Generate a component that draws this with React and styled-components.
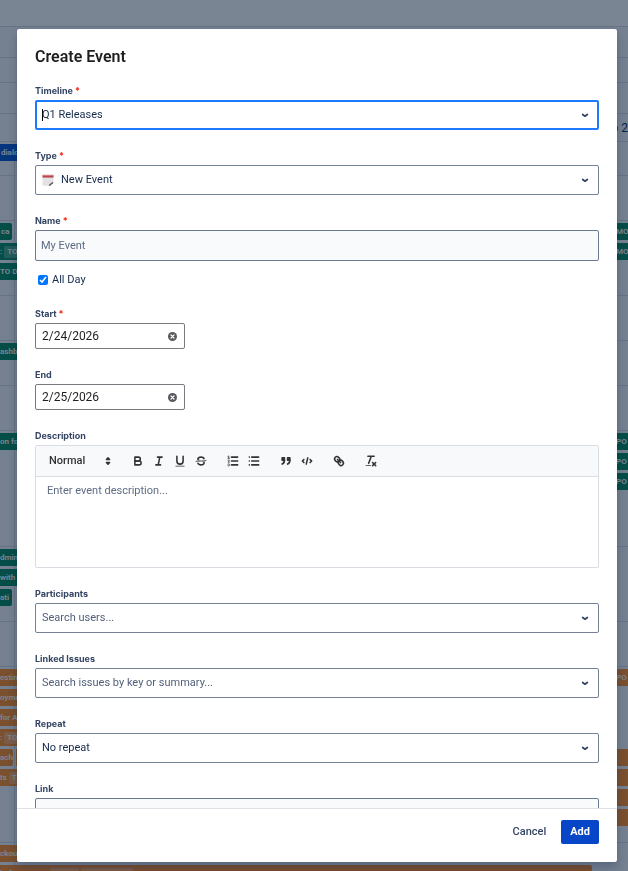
import React from 'react';
import styled, { createGlobalStyle } from 'styled-components';

const GlobalStyle = createGlobalStyle`
  * {
    box-sizing: border-box;
  }

  body {
    margin: 0;
    overflow: hidden;
    font-family: Roboto, "Liberation Sans", sans-serif;
    font-size: 11px;
    line-height: 16px;
    color: #172b4d;
  }

  button,
  input,
  select,
  textarea {
    font: inherit;
    color: inherit;
  }
`;

/* board behind the dialog */

const Board = styled.div`
  height: 100vh;
  overflow: hidden;
  background: #f4f5f7;
`;

const Band = styled.div`
  height: ${({ $height }) => $height}px;
  padding-top: ${({ $top }) => $top || 0}px;
  border-bottom: 1px solid #d5d8df;
  background: ${({ $light }) => ($light ? '#ffffff' : 'transparent')};
`;

const Days = styled(Band)`
  display: flex;
  align-items: center;
  justify-content: flex-end;
  font-size: 12px;
`;

const Columns = styled.div`
  background: linear-gradient(#d0d4dc, #d0d4dc) 14px 0 / 1px 100% no-repeat;
`;

const Lane = styled.div`
  display: flex;
  gap: 3px;
  height: 20px;
`;

const colors = {
  green: '#00875a',
  orange: '#ff8b24',
  blue: '#0052cc',
};

const Bar = styled.div`
  display: flex;
  align-items: center;
  gap: 2px;
  width: ${({ $width }) => $width || '60px'};
  height: 17px;
  padding-left: ${({ $pad }) => $pad || 0}px;
  margin-left: ${({ $right }) => ($right ? 'auto' : '0')};
  overflow: hidden;
  border-radius: ${({ $round }) => ($round ? '0 2px 2px 0' : '0')};
  background: ${({ $color }) => colors[$color]};
  color: #ffffff;
  font-size: 8px;
  font-weight: 600;
  line-height: 12px;
  white-space: nowrap;
`;

const Tag = styled.span`
  flex: none;
  height: 12px;
  padding: 0 3px;
  border-radius: 2px;
  background: rgba(255, 255, 255, 0.25);
`;

/* dialog */

const Blanket = styled.div`
  position: fixed;
  inset: 0;
  display: flex;
  padding: 29px 11px 9px 17px;
  background: rgba(9, 30, 58, 0.54);
`;

const Dialog = styled.form`
  display: flex;
  flex: 1;
  flex-direction: column;
  max-width: 800px;
  margin: 0 auto;
  border-radius: 2px;
  background: #ffffff;
  box-shadow: 0 0 1px rgba(9, 30, 66, 0.31), 0 6px 10px rgba(9, 30, 66, 0.25);
`;

const Title = styled.h1`
  margin: 0;
  padding: 18px;
  color: #1e1f21;
  font-size: 16px;
  font-weight: 600;
  line-height: 20px;
`;

const Body = styled.div`
  display: flex;
  flex: 1;
  flex-direction: column;
  gap: 20px;
  min-height: 0;
  padding: 0 18px 18px;
  overflow-y: auto;
  scrollbar-width: none;
`;

const Footer = styled.div`
  display: flex;
  align-items: center;
  justify-content: flex-end;
  gap: 6px;
  padding: 11px 18px 18px;
  border-top: 1px solid #dfe1e6;
`;

const Button = styled.button`
  height: 24px;
  padding: 0 9px;
  border: 0;
  border-radius: 2px;
  background: ${({ $primary }) => ($primary ? '#0747c7' : 'transparent')};
  color: ${({ $primary }) => ($primary ? '#ffffff' : '#344563')};
  font-weight: ${({ $primary }) => ($primary ? 700 : 500)};
`;

const Field = styled.div`
  flex: none;
`;

const Label = styled.label`
  display: block;
  height: 15px;
  color: #344563;
  font-family: Inter, "Liberation Sans", sans-serif;
  font-size: 9px;
  font-weight: 700;
  line-height: 12px;
`;

const Required = styled.span`
  margin-left: 2px;
  color: #ff1f0f;
`;

const SelectBox = styled.div`
  display: flex;
  align-items: center;
  height: 30px;
  padding: 0 ${({ $focused }) => ($focused ? 8 : 9)}px 0 ${({ $focused }) => ($focused ? 5 : 6)}px;
  border: ${({ $focused }) => ($focused ? '2px solid #1d7afc' : '1px solid #758195')};
  border-radius: 2px;
`;

const Select = styled.select`
  flex: 1;
  min-width: 0;
  padding: 0;
  border: 0;
  outline: 0;
  appearance: none;
  background: transparent;
  color: ${({ $empty }) => ($empty ? '#505f79' : '#172b4d')};
`;

const Caret = styled.span`
  width: 1px;
  height: 12px;
  margin-right: -1px;
  background: #000000;
`;

const TextInput = styled.input`
  display: block;
  width: 100%;
  height: 31px;
  padding: 0 5px;
  border: 1px solid #6b7a90;
  border-radius: 2px;
  background: #f8fafc;

  &::placeholder {
    color: #5e6c84;
    opacity: 1;
  }
`;

const CheckRow = styled.label`
  display: flex;
  align-items: center;
  gap: 4px;
  padding: 11px 0 0 3px;
`;

const Checkbox = styled.input`
  width: 10px;
  height: 10px;
  margin: 0;
  accent-color: #0075ff;
`;

const DateBox = styled.div`
  display: flex;
  align-items: center;
  width: 150px;
  height: 26px;
  padding: 0 6px;
  border: 1px solid #7a7a80;
  border-radius: 2px;
`;

const DateInput = styled.input`
  flex: 1;
  min-width: 0;
  padding: 0;
  border: 0;
  outline: 0;
  background: transparent;
  color: #1e1f21;
  font-size: 12px;
`;

const IconButton = styled.button`
  display: flex;
  align-items: center;
  justify-content: center;
  width: ${({ $width }) => $width}px;
  height: 18px;
  padding: 0;
  border: 0;
  background: transparent;
`;

const Editor = styled.div`
  border: 1px solid #d9dce3;
  border-radius: 2px;
`;

const Toolbar = styled.div`
  display: flex;
  align-items: center;
  gap: 11px;
  height: 31px;
  padding: 0 6px;
  border-bottom: 1px solid #d9dce3;
  background: #f8f9fb;
`;

const ToolGroup = styled.div`
  display: flex;
`;

const Picker = styled.div`
  display: flex;
  align-items: center;
  width: 74px;
  padding: 0 1px 0 7px;
`;

const PickerSelect = styled(Select)`
  color: #333333;
  font-weight: 500;
`;

const Description = styled.textarea`
  display: block;
  width: 100%;
  height: 90px;
  padding: 6px 11px;
  border: 0;
  outline: 0;
  resize: none;
  background: transparent;

  &::placeholder {
    color: #5e6c84;
    opacity: 1;
  }
`;

const ToolSvg = styled.svg`
  width: 14px;
  height: 14px;
  fill: none;
  stroke: #333333;
  stroke-width: 2;
  stroke-linecap: round;
  stroke-linejoin: round;

  .fill {
    fill: #333333;
  }

  .solid {
    fill: #333333;
    stroke: none;
  }

  .thin {
    stroke-width: 1;
  }
`;

const icons = {
  Bold: (
    <>
      <path d="M5,4H9.5A2.5,2.5,0,0,1,9.5,9H5Z" />
      <path d="M5,9h5.5A2.5,2.5,0,0,1,10.5,14H5Z" />
    </>
  ),
  Italic: <path d="M7,4H13M5,14H11M8,14L10,4" />,
  Underline: (
    <>
      <path d="M5,3V9a4,4,0,0,0,8,0V3" />
      <rect className="solid" x="3" y="15" width="12" height="1" rx="0.5" />
    </>
  ),
  Strike: (
    <>
      <path className="thin" d="M15.5,8.5L2.5,9.5" />
      <path
        className="solid"
        d="M9.007,8C6.542,7.791,6,7.519,6,6.5,6,5.792,7.283,5,9,5c1.571,0,2.765.679,2.969,1.309a1,1,0,0,0,1.9-.617C13.356,4.106,11.354,3,9,3,6.2,3,4,4.538,4,6.5a3.2,3.2,0,0,0,.5,1.843Z"
      />
      <path
        className="solid"
        d="M8.984,10C11.457,10.208,12,10.479,12,11.5c0,.708-1.283,1.5-3,1.5-1.571,0-2.765-.679-2.969-1.309a1,1,0,1,0-1.9.617C4.644,13.894,6.646,15,9,15c2.8,0,5-1.538,5-3.5a3.2,3.2,0,0,0-.5-1.843Z"
      />
    </>
  ),
  'Ordered list': (
    <>
      <path d="M7,4H15M7,9H15M7,14H15" />
      <path className="thin" d="M2.5,5.5H4.5M2.5,3L3.5,2.5V5.5" />
      <path className="thin" d="M4.5,10.5h-2c0-.234,1.85-1.076,1.85-2.234A.959,.959,0,0,0,2.5,8.156" />
      <path
        className="thin"
        d="M2.5,14.846a.959,.959,0,0,0,1.85-.109A.7,.7,0,0,0,3.75,14a.688,.688,0,0,0,.6-.736,.959,.959,0,0,0-1.85-.109"
      />
    </>
  ),
  'Bullet list': <path d="M6,4H15M6,9H15M6,14H15M3,4H3.01M3,9H3.01M3,14H3.01" />,
  Quote: (
    <>
      <path className="fill" d="M4,5H7V8H4ZM11,5H14V8H11Z" />
      <path className="fill" d="M7,8c0,4.031-3,5-3,5M14,8c0,4.031-3,5-3,5" />
    </>
  ),
  Code: <path d="M5,7L3,9L5,11M13,7L15,9L13,11M10,5L8,13" />,
  Link: (
    <>
      <path d="M7,7L11,11" />
      <path d="M8.9,4.577a3.476,3.476,0,0,1,.36,4.679A3.476,3.476,0,0,1,4.577,8.9C3.185,7.5,2.035,6.4,4.217,4.217S7.5,3.185,8.9,4.577Z" />
      <path d="M13.423,9.1a3.476,3.476,0,0,0-4.679-.36,3.476,3.476,0,0,0,.36,4.679c1.392,1.392,2.5,2.542,4.679.36S14.815,10.5,13.423,9.1Z" />
    </>
  ),
  'Clear formatting': (
    <>
      <path d="M5,3H13M6,12L9.35,3M11,11L15,15M15,11L11,15" />
      <rect className="solid" x="2" y="14" width="7" height="1" rx="0.5" />
    </>
  ),
};

const toolGroups = [
  ['Bold', 'Italic', 'Underline', 'Strike'],
  ['Ordered list', 'Bullet list'],
  ['Quote', 'Code'],
  ['Link'],
  ['Clear formatting'],
];

function Chevron() {
  return (
    <svg width="10" height="10" viewBox="0 0 10 10" fill="none" stroke="#344563" strokeWidth="1.8">
      <path d="M3.7 4.5L6 6.2L8.3 4.5" strokeLinecap="round" strokeLinejoin="round" />
    </svg>
  );
}

function CalendarIcon() {
  return (
    <svg width="12" height="12" viewBox="0 0 12 12">
      <path d="M0.5 1H11.5V8.5L8.5 11.8H0.5Z" fill="#e4e2e2" />
      <path d="M0.5 1H11.5V3.6H0.5Z" fill="#b8484b" />
      <path d="M0.5 0.4H11.5V1.4H0.5Z" fill="#e8c9c9" />
      <path d="M11.5 8L8.2 8.8L6.6 11.8H8.4Z" fill="#c9c9c9" />
      <path d="M11 8.6L7.2 11.5" stroke="#55565a" strokeWidth="1.3" />
    </svg>
  );
}

function ClearIcon() {
  return (
    <svg width="9" height="9" viewBox="0 0 9 9">
      <circle cx="4.5" cy="4.5" r="4.5" fill="#58595c" />
      <path d="M3 3L6 6M6 3L3 6" stroke="#ffffff" strokeWidth="1.2" strokeLinecap="round" />
    </svg>
  );
}

function SelectField({ id, label, value, required, focused, empty, icon }) {
  return (
    <Field>
      <Label htmlFor={id}>
        {label}
        {required && <Required>*</Required>}
      </Label>
      <SelectBox $focused={focused}>
        {focused && <Caret />}
        {icon}
        <Select id={id} $empty={empty}>
          <option>{value}</option>
        </Select>
        <Chevron />
      </SelectBox>
    </Field>
  );
}

function DateField({ id, label, value, required }) {
  return (
    <Field>
      <Label htmlFor={id}>
        {label}
        {required && <Required>*</Required>}
      </Label>
      <DateBox>
        <DateInput id={id} type="text" defaultValue={value} />
        <IconButton type="button" $width={11} aria-label={`Clear ${label}`}>
          <ClearIcon />
        </IconButton>
      </DateBox>
    </Field>
  );
}

const TypeIcon = styled.span`
  display: flex;
  margin-right: 7px;
`;

function Timeline() {
  return (
    <Board>
      <Band $height={27} $light />
      <Band $height={31} />
      <Band $height={25} />
      <Band $height={31} />
      <Days $height={28}>b 2</Days>
      <Columns>
        <Band $height={34} $top={2}>
          <Lane>
            <Bar $color="blue" $pad={1}>dialo</Bar>
          </Lane>
        </Band>
        <Band $height={45} />
        <Band $height={75} $top={2}>
          <Lane>
            <Bar $color="green" $width="12px" $pad={1} $round>ca</Bar>
            <Bar $color="green" $width="12px" $right>MO</Bar>
          </Lane>
          <Lane>
            <Bar $color="green">: <Tag>TO</Tag></Bar>
            <Bar $color="green" $width="12px" $right>MO</Bar>
          </Lane>
          <Lane>
            <Bar $color="green">TO D</Bar>
          </Lane>
        </Band>
        <Band $height={45} />
        <Band $height={45} $top={2}>
          <Lane>
            <Bar $color="green">ashb</Bar>
          </Lane>
        </Band>
        <Band $height={45} />
        <Band $height={116} $top={2}>
          <Lane>
            <Bar $color="green">on fo</Bar>
            <Bar $color="green" $right $width="12px">PO</Bar>
          </Lane>
          <Lane>
            <Bar $color="green" $right $width="12px">PO</Bar>
          </Lane>
          <Lane>
            <Bar $color="green" $right $width="12px">PO</Bar>
          </Lane>
        </Band>
        <Band $height={75} $top={2}>
          <Lane>
            <Bar $color="green">dmin</Bar>
          </Lane>
          <Lane>
            <Bar $color="green">with</Bar>
          </Lane>
          <Lane>
            <Bar $color="green" $width="12px" $round>ati</Bar>
          </Lane>
        </Band>
        <Band $height={45} />
        <Band $height={176} $top={2}>
          <Lane>
            <Bar $color="orange">estin</Bar>
            <Bar $color="orange" $right $width="12px">PO</Bar>
          </Lane>
          <Lane>
            <Bar $color="orange">oyme</Bar>
          </Lane>
          <Lane>
            <Bar $color="orange">for A</Bar>
          </Lane>
          <Lane>
            <Bar $color="orange">: <Tag>TO</Tag></Bar>
          </Lane>
          <Lane>
            <Bar $color="orange" $width="13px" $round>ach</Bar>
            <Bar $color="orange" />
            <Bar $color="orange" $right />
          </Lane>
          <Lane>
            <Bar $color="orange">ts <Tag>T</Tag></Bar>
            <Bar $color="orange" $right />
          </Lane>
          <Lane>
            <Bar $color="orange" $right />
          </Lane>
          <Lane>
            <Bar $color="orange" $right />
          </Lane>
        </Band>
        <Band $height={45} $top={2}>
          <Lane>
            <Bar $color="orange">ckou</Bar>
          </Lane>
          <Lane>
            <Bar $color="orange" $width="calc(100% - 36px)" $round>
              l of user acco <Tag>TO DO</Tag>
              <Tag>IMPORTANT</Tag>
            </Bar>
          </Lane>
        </Band>
      </Columns>
    </Board>
  );
}

export default function App() {
  return (
    <>
      <GlobalStyle />
      <Timeline />
      <Blanket>
        <Dialog>
          <Title>Create Event</Title>
          <Body>
            <SelectField id="timeline" label="Timeline" value="Q1 Releases" required focused />
            <SelectField
              id="type"
              label="Type"
              value="New Event"
              required
              icon={
                <TypeIcon>
                  <CalendarIcon />
                </TypeIcon>
              }
            />
            <Field>
              <Label htmlFor="name">
                Name<Required>*</Required>
              </Label>
              <TextInput id="name" placeholder="My Event" />
              <CheckRow>
                <Checkbox type="checkbox" defaultChecked />
                All Day
              </CheckRow>
            </Field>
            <DateField id="start" label="Start" value="2/24/2026" required />
            <DateField id="end" label="End" value="2/25/2026" />
            <Field>
              <Label htmlFor="description">Description</Label>
              <Editor>
                <Toolbar>
                  <Picker>
                    <PickerSelect aria-label="Text style">
                      <option>Normal</option>
                    </PickerSelect>
                    <ToolSvg viewBox="0 0 18 18">
                      <path className="fill" d="M7,11L9,13L11,11ZM7,7L9,5L11,7Z" />
                    </ToolSvg>
                  </Picker>
                  {toolGroups.map((group) => (
                    <ToolGroup key={group[0]}>
                      {group.map((name) => (
                        <IconButton key={name} type="button" $width={21} aria-label={name}>
                          <ToolSvg viewBox="0 0 18 18">{icons[name]}</ToolSvg>
                        </IconButton>
                      ))}
                    </ToolGroup>
                  ))}
                </Toolbar>
                <Description id="description" placeholder="Enter event description..." />
              </Editor>
            </Field>
            <SelectField id="participants" label="Participants" value="Search users..." empty />
            <SelectField
              id="issues"
              label="Linked Issues"
              value="Search issues by key or summary..."
              empty
            />
            <SelectField id="repeat" label="Repeat" value="No repeat" />
            <Field>
              <Label htmlFor="link">Link</Label>
              <TextInput id="link" />
            </Field>
          </Body>
          <Footer>
            <Button type="button">Cancel</Button>
            <Button type="button" $primary>Add</Button>
          </Footer>
        </Dialog>
      </Blanket>
    </>
  );
}
